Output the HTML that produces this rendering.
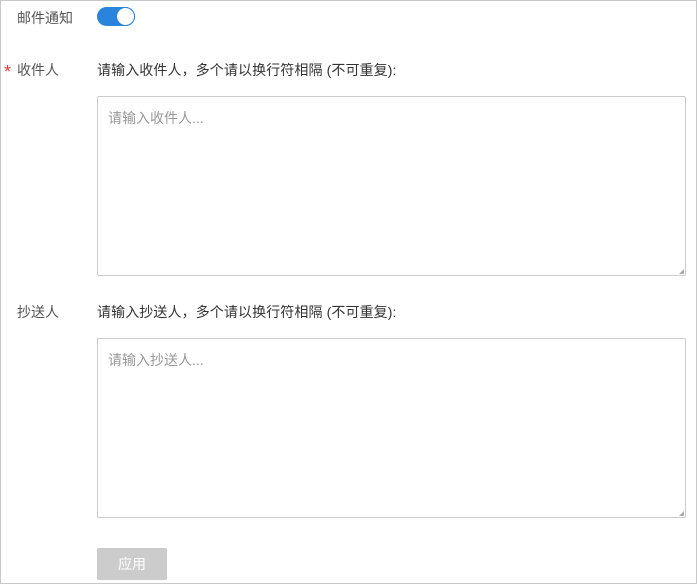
<!DOCTYPE html>
<html><head><meta charset="utf-8"><style>
html,body{margin:0;padding:0}
body{width:697px;height:584px;position:relative;background:#fff;font-family:"Liberation Sans","Noto Sans CJK SC",sans-serif;font-size:14px;overflow:hidden}
.frame{position:absolute;left:0;top:0;width:695px;height:582px;border:1px solid #c8c8c8}
.t{position:absolute;white-space:nowrap;line-height:16px}
.lab{color:#555}
.ta{position:absolute;left:97px;width:587px;height:178px;border:1px solid #ccc;border-radius:2px;background:#fff}
.ta span{position:absolute;left:10px;top:13px;color:#999;font-size:14px;line-height:16px}
.grip{position:absolute;right:1px;bottom:1px;width:0;height:0;border-left:5px solid transparent;border-bottom:5px solid #aaa}
</style></head><body>
<div class="frame"></div>
<div class="t lab" style="left:17px;top:10px">邮件通知</div>
<div style="position:absolute;left:97px;top:7px;width:38px;height:19px;border-radius:10px;background:#2a83dc"></div>
<div style="position:absolute;left:116px;top:7px;width:17px;height:17px;border-radius:50%;background:#fff;border:1px solid #2a83dc"></div>
<div class="t" style="left:4px;top:64px;color:#e4393c;font-size:18px">*</div>
<div class="t lab" style="left:17px;top:62px">收件人</div>
<div class="t" style="left:97px;top:62px;color:#333;letter-spacing:0.1px">请输入收件人，多个请以换行符相隔 (不可重复):</div>
<div class="ta" style="top:96px"><span>请输入收件人...</span><div class="grip"></div></div>
<div class="t lab" style="left:17px;top:304px">抄送人</div>
<div class="t" style="left:97px;top:304px;color:#333;letter-spacing:0.1px">请输入抄送人，多个请以换行符相隔 (不可重复):</div>
<div class="ta" style="top:338px"><span>请输入抄送人...</span><div class="grip"></div></div>
<div style="position:absolute;left:97px;top:548px;width:70px;height:32px;background:#ccc;border-radius:2px;color:#fff;text-align:center;line-height:32px;font-size:14px">应用</div>
</body></html>
